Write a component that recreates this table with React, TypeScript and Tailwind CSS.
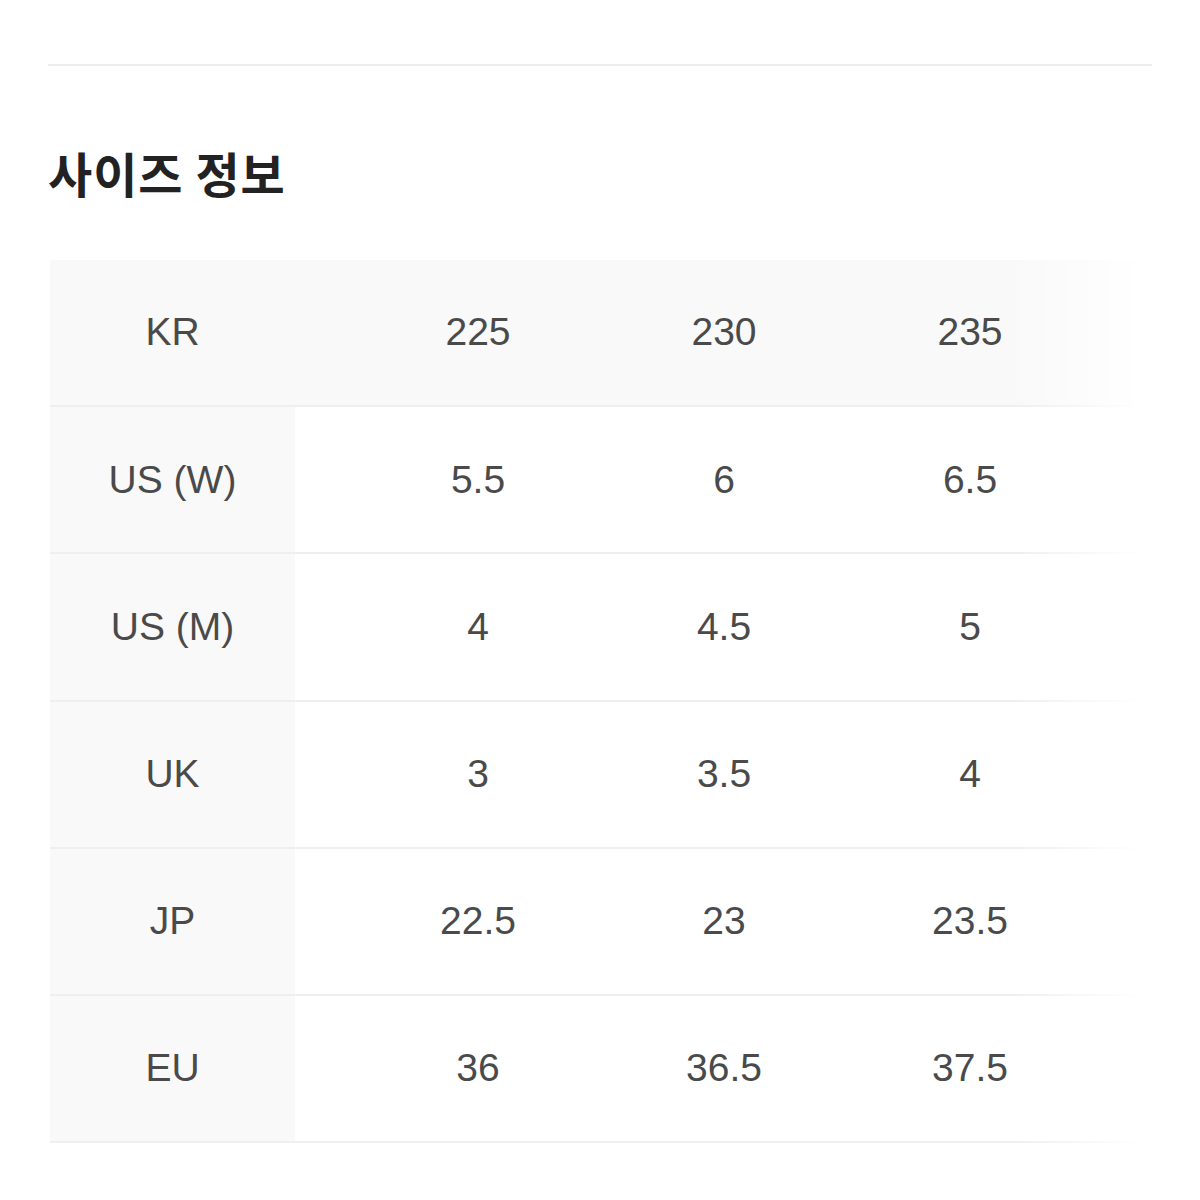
const rows: [string, string[]][] = [
  ["KR", ["225", "230", "235"]],
  ["US (W)", ["5.5", "6", "6.5"]],
  ["US (M)", ["4", "4.5", "5"]],
  ["UK", ["3", "3.5", "4"]],
  ["JP", ["22.5", "23", "23.5"]],
  ["EU", ["36", "36.5", "37.5"]],
]

export default function App() {
  return (
    <div className="min-h-[1200px] bg-white px-[48px] pt-[64px]" style={{ fontFamily: '"Liberation Sans", Arial, sans-serif' }}>
      <div className="h-[2px] bg-[#ececec]" />
      <h2
        className="mt-[76px] text-[48px] leading-[60px] font-bold tracking-[1px] text-[#222]"
        style={{ fontFamily: '"Noto Sans CJK KR", "Noto Sans", sans-serif' }}
      >
        사이즈 정보
      </h2>

      <div className="relative mt-[58px] w-[1092px] ml-[2px]">
        {rows.map(([label, values], i) => (
          <div
            key={label}
            className={`flex h-[147.2px] border-b-2 border-[#efefef] ${i === 0 ? "bg-[#f9f9f9]" : "bg-white"}`}
          >
            <div className="flex w-[245px] items-center justify-center bg-[#f9f9f9] text-[39px] text-[#4a4a4a]">
              {label}
            </div>
            <div className="w-[60px]" />
            {values.map((v, j) => (
              <div key={j} className="flex w-[246px] items-center justify-center text-[39px] text-[#4a4a4a]">
                {v}
              </div>
            ))}
            <div className="flex-1" />
          </div>
        ))}
        <div className="pointer-events-none absolute right-0 top-0 h-full w-[130px] bg-gradient-to-r from-transparent to-white" />
      </div>
    </div>
  )
}
